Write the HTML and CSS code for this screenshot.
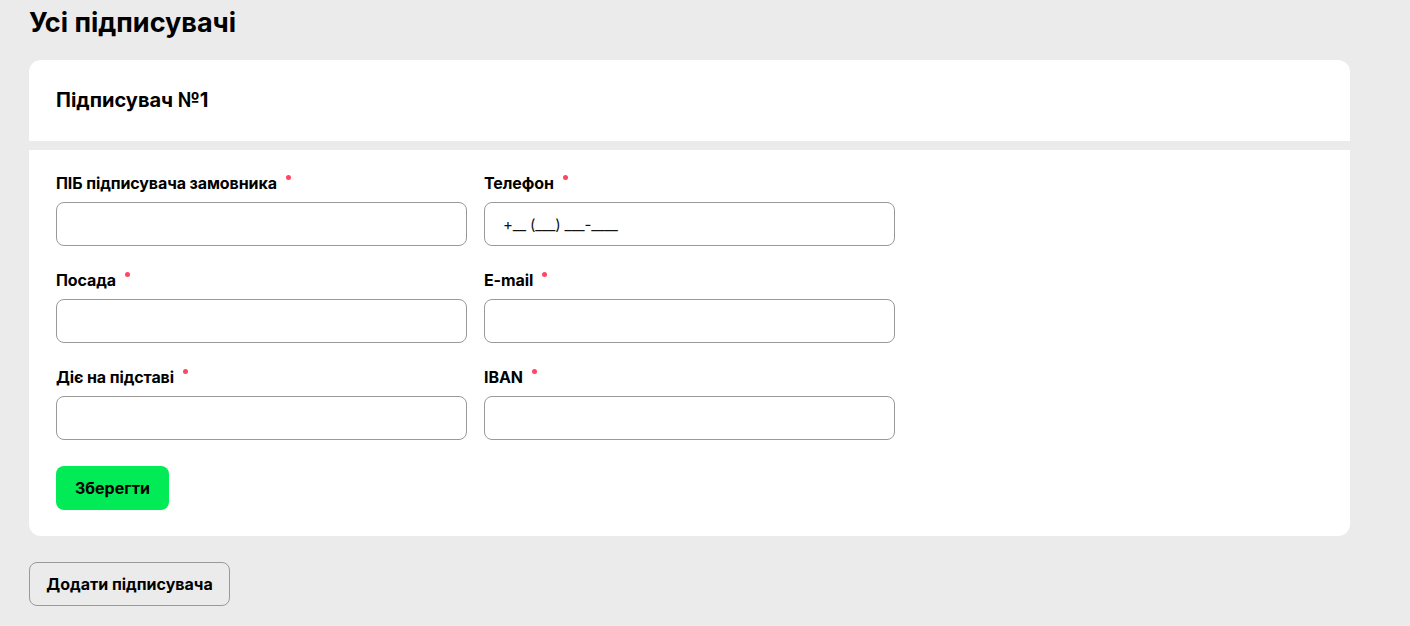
FILE: index.html
```html
<!DOCTYPE html>
<html lang="uk">
<head>
<meta charset="utf-8">
<link rel="stylesheet" href="styles.css">
</head>
<body>
<main class="page">
  <h1 class="title">Усі підписувачі</h1>
  <section class="card">
    <div class="card-head">
      <h2 class="card-title">Підписувач №1</h2>
    </div>
    <form class="card-body">
      <div class="grid">
        <label class="field">
          <span class="label">ПІБ підписувача замовника<i class="req"></i></span>
          <input class="input" type="text">
        </label>
        <label class="field">
          <span class="label">Телефон<i class="req"></i></span>
          <input class="input" type="text" value="+__ (___) ___-____">
        </label>
        <label class="field">
          <span class="label">Посада<i class="req"></i></span>
          <input class="input" type="text">
        </label>
        <label class="field">
          <span class="label">E-mail<i class="req"></i></span>
          <input class="input" type="text">
        </label>
        <label class="field">
          <span class="label">Діє на підставі<i class="req"></i></span>
          <input class="input" type="text">
        </label>
        <label class="field">
          <span class="label">IBAN<i class="req"></i></span>
          <input class="input" type="text">
        </label>
      </div>
      <button class="btn-save" type="button">Зберегти</button>
    </form>
  </section>
  <button class="btn-add" type="button">Додати підписувача</button>
</main>
</body>
</html>
```

FILE: styles.css
```css
* { box-sizing: border-box; }
html, body { margin: 0; padding: 0; }
body {
  background: #ebebeb;
  font-family: Inter, "Noto Sans", sans-serif;
  color: #000;
}
.page {
  padding: 5px 60px 20px 29px;
}
.title {
  margin: 0;
  font-size: 27px;
  font-weight: 700;
  line-height: 36px;
}
.card {
  margin-top: 19px;
  width: 1321px;
  display: flex;
  flex-direction: column;
  gap: 9px;
}
.card-head {
  background: #fff;
  border-radius: 12px 12px 0 0;
  height: 81px;
  padding: 0 27px 2px;
  display: flex;
  align-items: center;
}
.card-title {
  margin: 0;
  font-size: 20px;
  font-weight: 700;
}
.card-body {
  background: #fff;
  border-radius: 0 0 12px 12px;
  padding: 22px 27px 26px;
  margin: 0;
}
.grid {
  display: grid;
  grid-template-columns: 411px 411px;
  column-gap: 17px;
  row-gap: 23px;
}
.field {
  display: flex;
  flex-direction: column;
  gap: 8px;
}
.label {
  font-size: 16px;
  font-weight: 700;
  line-height: 22px;
  letter-spacing: -0.1px;
  display: flex;
  align-items: flex-start;
}
.req {
  width: 5px;
  height: 5px;
  border-radius: 50%;
  background: #ff4665;
  margin-left: 9px;
  margin-top: 3px;
}
.input {
  height: 44px;
  width: 100%;
  border: 1px solid #999;
  border-radius: 8px;
  background: #fff;
  padding: 0 18px;
  font-family: Inter, "Noto Sans", sans-serif;
  font-size: 15px;
  letter-spacing: -0.2px;
  color: #111;
  outline: none;
}
.btn-save {
  margin-top: 26px;
  height: 44px;
  width: 113px;
  border: none;
  border-radius: 8px;
  background: #00eb55;
  font-family: Inter, "Noto Sans", sans-serif;
  font-size: 16px;
  font-weight: 700;
  color: #000;
  padding: 0;
}
.btn-add {
  margin-top: 26px;
  height: 44px;
  width: 201px;
  border: 1px solid #999;
  border-radius: 8px;
  background: transparent;
  font-family: Inter, "Noto Sans", sans-serif;
  font-size: 16px;
  font-weight: 700;
  color: #000;
  padding: 0;
}
```
